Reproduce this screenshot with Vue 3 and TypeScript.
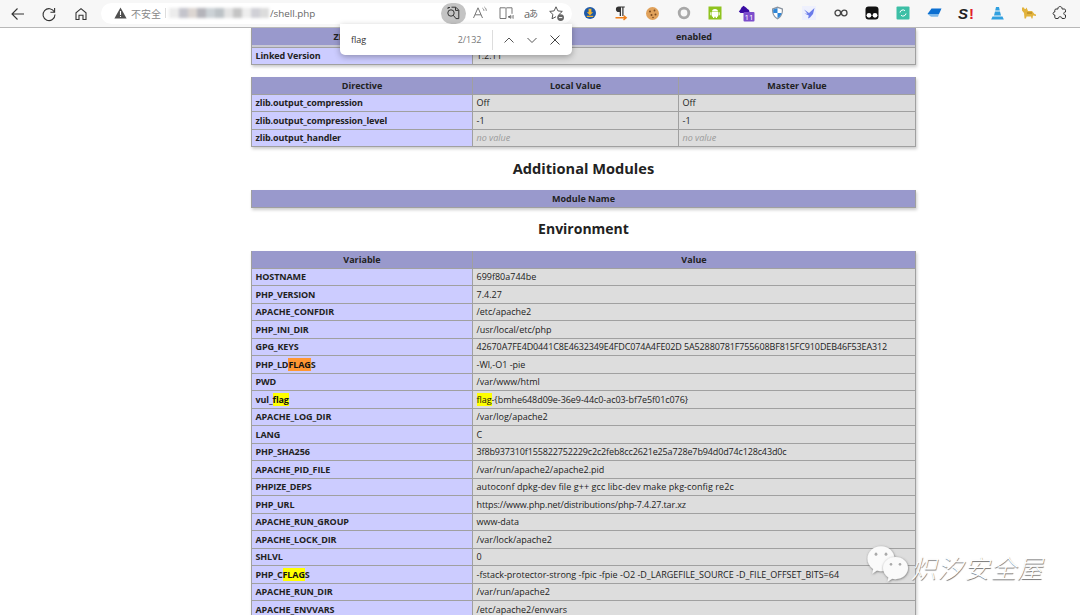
<script setup lang="ts">
interface Part { t: string; m?: '' | 'y' | 'o' }
interface Row { k: Part[]; v: Part[]; ls?: number }
const p = (t: string): Part[] => [{ t }]
const envRows: Row[] = [
  { k: p('HOSTNAME'), v: p('699f80a744be') },
  { k: p('PHP_VERSION'), v: p('7.4.27') },
  { k: p('APACHE_CONFDIR'), v: p('/etc/apache2') },
  { k: p('PHP_INI_DIR'), v: p('/usr/local/etc/php') },
  { k: p('GPG_KEYS'), v: p('42670A7FE4D0441C8E4632349E4FDC074A4FE02D 5A52880781F755608BF815FC910DEB46F53EA312'), ls: -0.12 },
  { k: [{ t: 'PHP_LD' }, { t: 'FLAG', m: 'o' }, { t: 'S' }], v: p('-Wl,-O1 -pie') },
  { k: p('PWD'), v: p('/var/www/html') },
  { k: [{ t: 'vul_' }, { t: 'flag', m: 'y' }], v: [{ t: 'flag', m: 'y' }, { t: '-{bmhe648d09e-36e9-44c0-ac03-bf7e5f01c076}' }], ls: -0.05 },
  { k: p('APACHE_LOG_DIR'), v: p('/var/log/apache2') },
  { k: p('LANG'), v: p('C') },
  { k: p('PHP_SHA256'), v: p('3f8b937310f155822752229c2c2feb8cc2621e25a728e7b94d0d74c128c43d0c'), ls: -0.14 },
  { k: p('APACHE_PID_FILE'), v: p('/var/run/apache2/apache2.pid') },
  { k: p('PHPIZE_DEPS'), v: p('autoconf dpkg-dev file g++ gcc libc-dev make pkg-config re2c'), ls: 0.07 },
  { k: p('PHP_URL'), v: p('https://www.php.net/distributions/php-7.4.27.tar.xz'), ls: -0.14 },
  { k: p('APACHE_RUN_GROUP'), v: p('www-data') },
  { k: p('APACHE_LOCK_DIR'), v: p('/var/lock/apache2') },
  { k: p('SHLVL'), v: p('0') },
  { k: [{ t: 'PHP_C' }, { t: 'FLAG', m: 'y' }, { t: 'S' }], v: p('-fstack-protector-strong -fpic -fpie -O2 -D_LARGEFILE_SOURCE -D_FILE_OFFSET_BITS=64') },
  { k: p('APACHE_RUN_DIR'), v: p('/var/run/apache2') },
  { k: p('APACHE_ENVVARS'), v: p('/etc/apache2/envvars') },
]
const zlibRows = [
  { k: 'zlib.output_compression', a: 'Off', b: 'Off', nv: false },
  { k: 'zlib.output_compression_level', a: '-1', b: '-1', nv: false },
  { k: 'zlib.output_handler', a: 'no value', b: 'no value', nv: true },
]
const blurBlocks = [
  { w: 10, c: '#ececec' }, { w: 9, c: '#c4c4cc' }, { w: 9, c: '#dcd6d2' }, { w: 9, c: '#b4b4ba' },
  { w: 9, c: '#ccd2d6' }, { w: 9, c: '#bcc2c6' }, { w: 9, c: '#e4e4e4' }, { w: 9, c: '#c4c4c4' },
  { w: 9, c: '#eeeeee' }, { w: 9, c: '#d0d0d6' }, { w: 9, c: '#dcdcdc' },
]
</script>

<template>
  <div class="page">
    <header class="toolbar">
      <div class="nav">
        <button class="tb"><svg width="16" height="16" viewBox="0 0 16 16" fill="none" stroke="#333" stroke-width="1.1"><path d="M14 8H2M7.500 2.500 2 8l5.500 5.500" /></svg></button>
        <button class="tb"><svg width="16" height="16" viewBox="0 0 16 16" fill="none" stroke="#333" stroke-width="1.1"><path d="M13.400 6A6 6 0 1 0 14 8.600" /><path d="M13.600 2v4.200H9.400" /></svg></button>
        <button class="tb"><svg width="16" height="16" viewBox="0 0 16 16" fill="none" stroke="#333" stroke-width="1.1"><path d="M3 13.500V6.800L8 2.600l5 4.200v6.700h-3V9.200H6v4.300z" /></svg></button>
      </div>
      <div class="addr">
        <svg class="warn" width="13" height="12" viewBox="0 0 13 12"><path d="M6.500.6 12.600 11.400H.4z" fill="#505050" /><path d="M6.500 4v4M6.500 8.900v1.200" stroke="#fff" stroke-width="1.100" /></svg>
        <span class="insecure">不安全</span>
        <span class="sep"></span>
        <span class="blur"><i v-for="(b, i) in blurBlocks" :key="i" :style="{ width: b.w + 'px', background: b.c }"></i></span>
        <span class="url">/shell.php</span>
        <span class="spacer"></span>
        <span class="pill">
          <svg width="16" height="16" viewBox="0 0 16 16" fill="none" stroke="#333" stroke-width="1"><path d="M6.500 2.200h4.300l3 3v8.400h-3" /><path d="M10.500 2.400v3h3" /><circle cx="6" cy="8" r="3.200" /><path d="M8.300 10.300 11 13.600" /><path d="M3 4V2.500h2" /></svg>
        </span>
        <span class="ai">
          <svg width="16" height="16" viewBox="0 0 16 16" fill="none" stroke="#777" stroke-width="1"><path d="M1.500 13 6 2.800 10.500 13M3 9.800h6" /><path d="M10.500 3.200c1 .7 1.400 1.600 1.400 2.600M12.400 2c1.200 1 1.900 2.300 1.900 3.800" stroke-width=".9" /></svg>
        </span>
        <span class="ai">
          <svg width="16" height="16" viewBox="0 0 16 16" fill="none" stroke="#777" stroke-width="1"><path d="M8 13.500H2V2.800h5.200L8 3.500l.8-.7H14v6" /><path d="M8 3.500v10" /><path d="M10 11.200h1.200l1.500-1.400v4.200l-1.500-1.400H10z" fill="#555" stroke="none" /><path d="M14 10.500v2.800M15.200 10v3.800" stroke-width=".8" /></svg>
        </span>
        <span class="ai translate">a<span class="cjk">あ</span></span>
        <span class="ai">
          <svg width="17" height="17" viewBox="0 0 17 17" fill="none" stroke="#555" stroke-width="1"><path d="M8 1.800 9.900 5.900l4.400.5-3.200 3 .4 1.600M8 1.800 6.100 5.900l-4.400.5 3.200 3-.9 4.400L8 11.700" /><circle cx="12.600" cy="12.600" r="3.400" fill="#666" stroke="none" /><path d="M10.900 12.600h3.400" stroke="#fff" stroke-width="1" /></svg>
        </span>
      </div>
      <div class="exts">
        <span class="ext"><svg width="14" height="14" viewBox="0 0 14 14"><circle cx="7" cy="7" r="6" fill="#1e5aa8" /><path d="M5.600 2.800h2.800v3.400h1.800L7 9.200 3.800 6.200h1.800z" fill="#f4b32a" /><rect x="3.800" y="9.800" width="6.400" height="1.200" fill="#f4b32a" /></svg></span>
        <span class="ext"><svg width="16" height="16" viewBox="0 0 16 16"><path d="M7.500 1.500H5.700a2.800 2.800 0 0 0 0 5.600h1V11H8V2.600h1.300V11h1.200V2.600h1.300V1.500z" fill="#333" /><path d="M2.500 12.700h10M10.500 10.500l2.700 2.200-2.700 2.200" stroke="#ef7f1a" stroke-width="1.400" fill="none" /></svg></span>
        <span class="ext"><svg width="15" height="15" viewBox="0 0 15 15"><circle cx="7.500" cy="7.500" r="6.500" fill="#e0a15a" /><circle cx="5" cy="5.500" r="1" fill="#7a4a20" /><circle cx="9.500" cy="4.500" r=".9" fill="#7a4a20" /><circle cx="10.500" cy="8.500" r="1" fill="#7a4a20" /><circle cx="6.500" cy="9" r="1" fill="#7a4a20" /><circle cx="8" cy="11.500" r=".8" fill="#7a4a20" /></svg></span>
        <span class="ext"><svg width="14" height="14" viewBox="0 0 14 14"><circle cx="7" cy="7" r="4.800" fill="none" stroke="#a8a8a8" stroke-width="2.800" /></svg></span>
        <span class="ext"><svg width="14" height="14" viewBox="0 0 14 14"><rect width="13" height="13" x=".5" y=".5" fill="#8fc31f" /><path d="M3.800 6h6.400v3.800c0 .6-.4 1-1 1H4.800c-.6 0-1-.4-1-1zM4 5.400a3 2.500 0 0 1 6 0zM2.300 6.200h1v3h-1zM10.700 6.200h1v3h-1zM5 10.500h1.300V12H5zM7.700 10.500H9V12H7.700z" fill="#fff" /></svg></span>
        <span class="ext"><svg width="17" height="17" viewBox="0 0 17 17"><path d="M5.500.8 8 2.500 9.500 4l1.500 1 .6 2.500H9V11H7V8H2.500L.8 6.500l1.700-2 1-2z" fill="#3a0ca3" /><rect x="5.500" y="7" width="11" height="9.500" rx="1" fill="#7c4dcc" /><text x="11" y="15" class="badge">11</text></svg></span>
        <span class="ext"><svg width="13" height="14" viewBox="0 0 13 14"><path d="M6.500.5 12 2.500c.3 4.700-1.300 8.500-5.500 11-4.200-2.500-5.800-6.300-5.500-11z" fill="#8a94a0" /><path d="M6.500 2 10.800 3.500c.2 3.800-1 6.800-4.300 8.800-3.300-2-4.500-5-4.300-8.800z" fill="#fff" /><path d="M6.500 2v5H2.300c-.1-1.100-.2-2.300-.1-3.500zM6.500 7h4.100c-.4 2.200-1.800 4-4.100 5.300z" fill="#2f86d6" /></svg></span>
        <span class="ext"><span class="birdbg"><svg width="13" height="12" viewBox="0 0 13 12"><path d="M1 2.500 6 6l5.500-5-1.500 6-3 3.500-2 1 .8-3L1.500 6.500l3 .2z" fill="#6a7bea" /></svg></span></span>
        <span class="ext"><svg width="14" height="8" viewBox="0 0 14 8" fill="none" stroke="#444" stroke-width="1.300"><circle cx="3.800" cy="4" r="2.800" /><circle cx="10.200" cy="4" r="2.800" /></svg></span>
        <span class="ext"><svg width="14" height="14" viewBox="0 0 14 14"><rect x=".5" y=".5" width="13" height="13" rx="3" fill="#111" /><circle cx="4" cy="9.300" r="2.400" fill="#fff" /><circle cx="10" cy="9.300" r="2.400" fill="#fff" /></svg></span>
        <span class="ext"><svg width="14" height="14" viewBox="0 0 14 14"><rect width="13" height="13" x=".5" y=".5" rx="1" fill="#3cbfa6" /><path d="M4 6.500a3 3 0 0 1 5-1.800M10 7.500a3 3 0 0 1-5 1.800" stroke="#fff" stroke-width="1" fill="none" /></svg></span>
        <span class="ext"><svg width="15" height="10" viewBox="0 0 15 10"><path d="M4.500.5h10L12 6H.5z" fill="#0b6fd1" /><path d="M.5 6H12l-1 2.800H4z" fill="#7cb8ea" /></svg></span>
        <span class="ext sbang"><span class="s">S</span><span class="ex">!</span></span>
        <span class="ext"><svg width="13" height="13" viewBox="0 0 13 13"><path d="M5 0h3l.8 3.500H4.200zM4 4.500h5l1 4H3zM1.500 9.500h10l1.300 3H.2z" fill="#30a0e0" /></svg></span>
        <span class="ext"><svg width="15" height="12" viewBox="0 0 15 12"><path d="M1 .5h2l.6 1.500h1L5.500.5 7 4h4l2.500 3 1.500.5V9l-3-.5-.5 3H10.500l-.5-2H5.500L5 11.500H3.500L3 6 1 3.500z" fill="#e2b33c" /><path d="M6 6h5" stroke="#a77a1f" /></svg></span>
        <span class="ext"><svg width="16" height="16" viewBox="0 0 16 16" fill="none" stroke="#333" stroke-width="1"><path d="M6 3.300c0-2.300 4-2.300 4 0V4h2.300c.7 0 1.200.5 1.200 1.200V7c-2.300-.2-2.300 3.200 0 3v2.300c0 .7-.5 1.200-1.200 1.200H10c.2-2.300-4-2.300-3.800 0H4c-.7 0-1.200-.5-1.200-1.200V10C.5 10.200.5 6.800 2.800 7V5.200C2.800 4.500 3.300 4 4 4h2z" /></svg></span>
      </div>
    </header>

    <main class="content">
      <section class="tbl two">
        <div class="row head tall"><div class="c">ZLib Support</div><div class="c">enabled</div></div>
        <div class="row"><div class="c key">Linked Version</div><div class="c val">1.2.11</div></div>
      </section>

      <section class="tbl three gap-top">
        <div class="row head"><div class="c">Directive</div><div class="c">Local Value</div><div class="c">Master Value</div></div>
        <div v-for="r in zlibRows" :key="r.k" class="row">
          <div class="c key">{{ r.k }}</div>
          <div class="c val" :class="{ nv: r.nv }">{{ r.a }}</div>
          <div class="c val" :class="{ nv: r.nv }">{{ r.b }}</div>
        </div>
      </section>

      <h2 class="h2 first">Additional Modules</h2>
      <section class="tbl one">
        <div class="row head"><div class="c">Module Name</div></div>
      </section>

      <h2 class="h2 second">Environment</h2>
      <section class="tbl two">
        <div class="row head"><div class="c">Variable</div><div class="c">Value</div></div>
        <div v-for="(r, i) in envRows" :key="i" class="row">
          <div class="c key"><span v-for="(s, j) in r.k" :key="j" :class="s.m">{{ s.t }}</span></div>
          <div class="c val" :style="r.ls ? { letterSpacing: r.ls + 'px' } : undefined"><span v-for="(s, j) in r.v" :key="j" :class="s.m">{{ s.t }}</span></div>
        </div>
      </section>
    </main>

    <div class="find">
      <span class="q">flag</span>
      <span class="count">2/132</span>
      <span class="div"></span>
      <svg class="fi" width="12" height="12" viewBox="0 0 12 12" fill="none" stroke="#555" stroke-width="1"><path d="M1.500 8.500 6 4l4.500 4.500" /></svg>
      <svg class="fi" width="12" height="12" viewBox="0 0 12 12" fill="none" stroke="#555" stroke-width="1"><path d="M1.500 4 6 8.500 10.500 4" /></svg>
      <svg class="fi" width="12" height="12" viewBox="0 0 12 12" fill="none" stroke="#444" stroke-width="1"><path d="m1.500 1.500 9 9M10.500 1.500l-9 9" /></svg>
    </div>

    <div class="mark">
      <svg width="44" height="43" viewBox="0 0 44 38" preserveAspectRatio="none">
        <defs><filter id="sh" x="-20%" y="-20%" width="140%" height="140%"><feDropShadow dx=".4" dy=".6" stdDeviation=".8" flood-color="#555" flood-opacity=".8" /></filter></defs>
        <path filter="url(#sh)" fill="#fafafa" d="M15 2c7.500 0 13.500 4.800 13.500 11S22.500 24 15 24c-1.400 0-2.700-.2-4-.5l-4.800 2.800 1-4.200C3.700 20 1.500 16.800 1.500 13 1.500 6.800 7.500 2 15 2z" />
        <path filter="url(#sh)" fill="#fafafa" d="M29.500 11.500c6.800 0 12.500 4.300 12.500 9.800s-5.700 9.800-12.500 9.800c-1.200 0-2.400-.1-3.400-.4l-4.600 2.600.9-3.700c-3.500-1.900-5.400-4.900-5.400-8.300 0-5.500 5.700-9.800 12.500-9.800z" />
        <g fill="#aaa"><circle cx="10" cy="9" r="1.400" /><circle cx="20" cy="9" r="1.400" /><circle cx="25" cy="18" r="1.300" /><circle cx="34" cy="18" r="1.300" /></g>
      </svg>
      <span class="mark-text">炽汐安全屋</span>
    </div>
  </div>
</template>

<style>
html, body { margin: 0; background: #fff; }
</style>

<style scoped>
.page {
  position: relative;
  width: 1080px;
  height: 615px;
  overflow: hidden;
  background: #fff;
  font-family: "Open Sans", "Noto Sans CJK SC", sans-serif;
  color: #222;
}
.toolbar {
  display: flex;
  align-items: center;
  height: 27px;
  box-sizing: content-box;
  background: #f7f7f7;
  border-bottom: 1px solid #b8b8b8;
}
.nav { display: flex; padding-left: 2px; width: 101px; box-sizing: border-box; }
.tb {
  width: 31.500px; height: 27px; padding: 0; border: 0; background: none;
  display: flex; align-items: center; justify-content: center;
}
.addr {
  width: 471px; height: 21px; margin-top: -1px;
  display: flex; align-items: center;
  background: #fff; border-radius: 11px;
  padding: 0 0 0 13px; box-sizing: border-box;
  font-size: 9.800px; color: #666;
}
.warn { margin-right: 4px; flex: none; }
.insecure { width: 31px; color: #888; font-size: 10px; flex: none; }
.sep { width: 1px; height: 10px; background: #ddd; margin: 0 3px 0 3px; flex: none; }
.blur { display: flex; height: 10px; width: 100px; filter: blur(1.500px); flex: none; }
.blur i { display: block; height: 10px; }
.url { margin-left: 1px; color: #666; }
.spacer { flex: 1; }
.pill {
  width: 25px; height: 21px; border-radius: 11px; background: #c4c4c4; margin-right: 2px;
  display: flex; align-items: center; justify-content: center; flex: none;
}
.ai { width: 25.300px; display: flex; align-items: center; justify-content: center; flex: none; }
.ai:last-child { margin-right: 3px; }
.translate { color: #666; font-size: 11px; }
.cjk { font-size: 9px; margin-left: -1px; }
.exts { display: flex; margin-left: 2.300px; margin-top: -1px; }
.ext { width: 31.330px; height: 24px; display: flex; align-items: center; justify-content: center; }
.badge { font-size: 8px; fill: #fff; text-anchor: middle; font-family: "Open Sans", sans-serif; }
.birdbg { width: 14px; height: 14px; background: #eef0fd; display: flex; align-items: center; justify-content: center; }
.sbang { font-family: "Liberation Sans", sans-serif; font-weight: 700; font-size: 15px; font-style: italic; }
.s { color: #222; }
.ex { color: #e0202a; margin-left: 1px; font-style: normal; }

.content { width: 665px; margin-left: 251px; display: flex; flex-direction: column; }
.tbl { box-shadow: 1px 2px 3px #ccc; font-size: 9px; }
.gap-top { margin-top: 11.500px; }
.row { display: grid; height: 17.500px; box-sizing: border-box; border-bottom: 1px solid #a0a0a0; }
.two .row { grid-template-columns: 222px 1fr; }
.three .row { grid-template-columns: 222px 206px 1fr; }
.one .row { grid-template-columns: 1fr; }
.c {
  display: flex; align-items: center; padding: 0 3.500px; white-space: pre;
  border-right: 1px solid #a0a0a0; box-sizing: border-box; min-width: 0; overflow: hidden;
}
.c:first-child { border-left: 1px solid #a0a0a0; }
.row.head { background: #9999cc; font-weight: 700; height: 18px; }
.row.head.tall { height: 19.500px; box-shadow: inset 0 -2px 0 #c8c8d4; }
.row.head.tall .c { padding-bottom: 2px; }
.head .c { justify-content: center; }
.key { background: #ccccff; font-weight: 700; letter-spacing: -.12px; }
.val { background: #dddddd; }
.nv { color: #999; font-style: italic; }
.y { background: #ffff00; color: #111; }
.o { background: #ff9632; color: #111; }
.h2 { margin: 0; text-align: center; font-weight: 700; color: #222; }
.first { font-size: 14.600px; line-height: 20px; padding: 10.500px 0 12.250px; }
.second { font-size: 14px; line-height: 20px; padding: 11.250px 0 11.500px; }

.find {
  position: absolute; left: 340px; top: 24px; width: 232px; height: 31px;
  display: flex; align-items: center; box-sizing: border-box;
  background: #fff; border-radius: 0 0 5px 5px;
  box-shadow: 0 2px 6px rgba(0, 0, 0, .3);
  font-size: 9px; padding-left: 11px;
}
.q { width: 107px; color: #333; }
.count { width: 34px; color: #777; }
.div { width: 1px; height: 20px; background: #ddd; margin-right: 10.500px; }
.fi { margin-right: 11px; flex: none; }

.mark {
  position: absolute; left: 866px; top: 544px;
  display: flex; align-items: flex-start;
}
.mark-text {
  margin-left: 1px; margin-top: 8px;
  font-family: "Noto Sans CJK SC", sans-serif; font-weight: 300; font-style: italic;
  font-size: 25.500px; line-height: 30px; letter-spacing: 1px; color: #fff;
  text-shadow: .5px .5px .7px #777;
}
</style>
